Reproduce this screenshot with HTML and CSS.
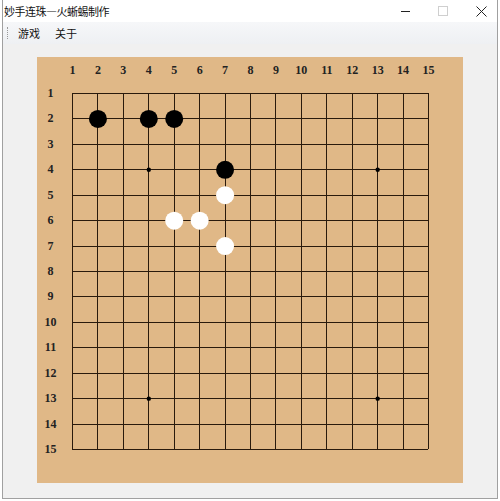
FILE: index.html
```html
<!DOCTYPE html>
<html lang="zh-CN">
<head>
    <meta charset="UTF-8">
    <title>妙手连珠</title>
    <link rel="stylesheet" href="styles.css">
    <script>
        window.onload = function(){
            var svg = document.getElementById("grid");
            var ns = "http://www.w3.org/2000/svg";
            var step = 25.43;
            var ox = 35, oy = 36;
            var black = [[2,2],[4,2],[5,2],[7,4]];
            var white = [[7,5],[5,6],[6,6],[7,7]];
            var stars = [[4,4],[13,4],[4,13],[13,13]];

            function el(name, attrs, text){
                var e = document.createElementNS(ns, name);
                for(var k in attrs){
                    e.setAttribute(k, attrs[k]);
                }
                if(text){
                    e.textContent = text;
                }
                svg.appendChild(e);
                return e;
            }
            function gx(i){ return ox + step * (i - 1); }
            function gy(j){ return oy + step * (j - 1); }

            var d = "";
            for(var i = 1; i <= 15; ++i){
                d += "M" + Math.round(gx(i)) + ".5 " + gy(1) + "V" + gy(15);
                d += "M" + gx(1) + " " + Math.round(gy(i)) + ".5H" + gx(15);
                el("text", {x: gx(i) + 0.5, y: 12.5, "class": "num"}, String(i));
                el("text", {x: 13.5, y: gy(i), "class": "num"}, String(i));
            }
            el("path", {d: d, "class": "line"});

            for(var s = 0; s < stars.length; ++s){
                el("circle", {cx: gx(stars[s][0]) + 0.5, cy: gy(stars[s][1]) + 0.5, r: 2.2, "class": "star"});
            }
            for(var b = 0; b < black.length; ++b){
                el("circle", {cx: gx(black[b][0]) + 0.5, cy: gy(black[b][1]) + 0.5, r: 9, "class": "black"});
            }
            for(var w = 0; w < white.length; ++w){
                el("circle", {cx: gx(white[w][0]) + 0.5, cy: gy(white[w][1]) + 0.5, r: 9, "class": "white"});
            }
        }
    </script>
</head>
<body>
    <div class="window">
        <div class="titlebar">
            <span class="title">妙手连珠—火蜥蜴制作</span>
            <div class="controls">
                <span class="ctl min"></span>
                <span class="ctl max"></span>
                <span class="ctl close">
                    <svg width="11" height="11" viewBox="0 0 11 11"><path d="M0.5 0.5L10.5 10.5M10.5 0.5L0.5 10.5" stroke="#222" stroke-width="1"/></svg>
                </span>
            </div>
        </div>
        <div class="menubar">
            <span class="grip"></span>
            <span class="menu">游戏</span>
            <span class="menu">关于</span>
        </div>
        <div class="client">
            <div class="board">
                <svg id="grid" width="426" height="426" viewBox="0 0 426 426"></svg>
            </div>
        </div>
    </div>
</body>
</html>
```

FILE: styles.css
```css
*{
    padding: 0;
    margin: 0;
    box-sizing: border-box;
}
body{
    background: #fff;
    font-family: "Noto Sans CJK SC", "Noto Sans", sans-serif;
}
.window{
    width: 496px;
    height: 499px;
    margin-left: 2px;
    border: 1px solid #a0a0a0;
    border-top: none;
    background: #f0f0f0;
    display: flex;
    flex-direction: column;
}
.titlebar{
    height: 22px;
    background: #fff;
    display: flex;
    align-items: center;
    justify-content: space-between;
}
.title{
    font-size: 11px;
    color: #111;
    padding-left: 1px;
    letter-spacing: -0.5px;
}
.controls{
    display: flex;
    align-items: center;
    height: 22px;
}
.ctl{
    width: 38px;
    height: 22px;
    display: flex;
    align-items: center;
    justify-content: center;
}
.min::before{
    content: "";
    width: 9px;
    height: 1px;
    background: #222;
}
.max::before{
    content: "";
    width: 8px;
    height: 8px;
    border: 1px solid #cfcfcf;
}
.close{
    width: 38px;
    margin-right: -3px;
}
.menubar{
    height: 22px;
    background: linear-gradient(#f6f7f9, #eef0f3);
    display: flex;
    align-items: center;
    font-size: 11px;
    color: #111;
}
.grip{
    width: 1px;
    height: 12px;
    margin: 0 10px 0 4px;
    border-left: 1px dotted #999;
}
.menu{
    margin-right: 15px;
}
.client{
    flex: 1;
    padding: 13px 0 0 34px;
}
.board{
    width: 426px;
    height: 426px;
    background: #e0b887;
}
#grid{
    display: block;
}
.line{
    stroke: #2a1a0c;
    stroke-width: 1;
    fill: none;
}
.num{
    font-family: "Liberation Serif", "DejaVu Serif", serif;
    font-weight: bold;
    font-size: 12px;
    fill: #222;
    text-anchor: middle;
    dominant-baseline: central;
}
.star{
    fill: #000;
}
.black{
    fill: #000;
}
.white{
    fill: #fff;
}
```
